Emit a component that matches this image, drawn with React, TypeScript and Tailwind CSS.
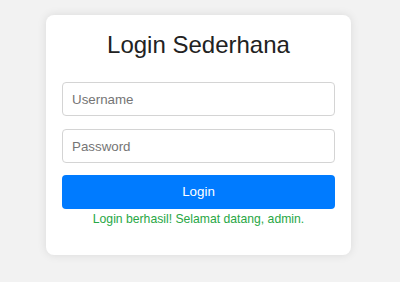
import React from "react";

export default function App() {
  return (
    <div className="min-h-[282px] bg-[#f2f2f2] pt-[15px] font-['Liberation_Sans',Arial,sans-serif]">
      <div className="ml-[46px] w-[305px] rounded-lg bg-white px-4 pt-4 pb-[29px] shadow-[0_0_10px_rgba(0,0,0,0.1)]">
        <h2 className="text-center text-[24px] leading-[28px] text-[#222]">Login Sederhana</h2>
        <form className="mt-[23px] flex flex-col">
          <input
            type="text"
            placeholder="Username"
            className="mb-[13px] h-[34px] w-full rounded border border-[#d4d4d4] px-[9px] text-[13.333px] placeholder:text-[#757575] outline-none"
          />
          <input
            type="password"
            placeholder="Password"
            className="mb-3 h-[34px] w-full rounded border border-[#d4d4d4] px-[9px] text-[13.333px] placeholder:text-[#757575] outline-none"
          />
          <button
            type="button"
            className="h-[34px] w-full rounded bg-[#007bff] text-[13.333px] text-white"
          >
            Login
          </button>
        </form>
        <p className="mt-[3px] text-center text-[12.2px] leading-[14px] text-[#28a745]">
          Login berhasil! Selamat datang, admin.
        </p>
      </div>
    </div>
  );
}
